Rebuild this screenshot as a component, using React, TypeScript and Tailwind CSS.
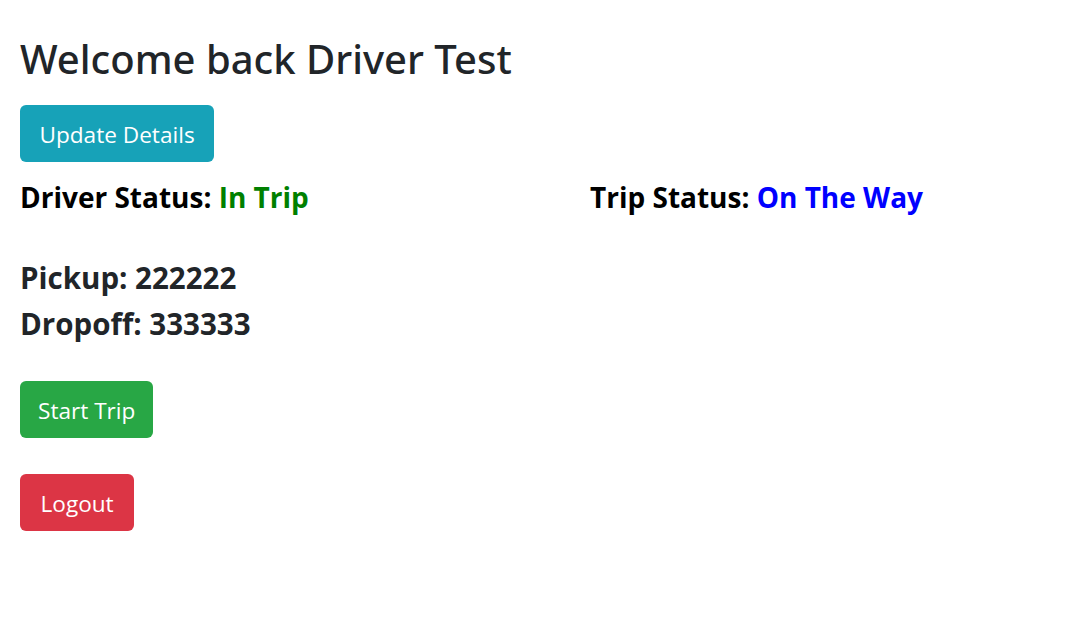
export default function App() {
  const font = { fontFamily: '"Open Sans", "Noto Sans", sans-serif' };

  return (
    <div className="min-h-screen bg-white text-[#212529]" style={font}>
      <div className="flex flex-col items-start px-[20px] pt-[30px]">
        <h1
          className="text-[40px] font-medium leading-[57px]"
          style={{ fontFamily: '"Noto Sans", "Open Sans", sans-serif' }}
        >
          Welcome back Driver Test
        </h1>

        <button className="mt-[18px] h-[57px] rounded-[6px] bg-[#17a2b8] px-[19.5px] pt-[3px] text-[22.6px] text-white">
          Update Details
        </button>

        <div className="mt-[14px] grid w-full grid-cols-[570px_1fr] text-[28px] font-bold leading-[42px] text-black">
          <div>
            Driver Status: <span className="text-[#008000]">In Trip</span>
          </div>
          <div>
            Trip Status: <span className="text-[#0000ff]">On The Way</span>
          </div>
        </div>

        <div className="mt-[37px] text-[29.5px] font-bold leading-[46px]">
          <div>Pickup: 222222</div>
          <div>Dropoff: 333333</div>
        </div>

        <button className="mt-[34px] h-[57px] rounded-[6px] bg-[#28a745] px-[18px] pt-[3px] text-[22.6px] text-white">
          Start Trip
        </button>

        <button className="mt-[36px] h-[57px] rounded-[6px] bg-[#dc3545] px-[20.5px] pt-[3px] text-[22.6px] text-white">
          Logout
        </button>
      </div>
    </div>
  );
}
